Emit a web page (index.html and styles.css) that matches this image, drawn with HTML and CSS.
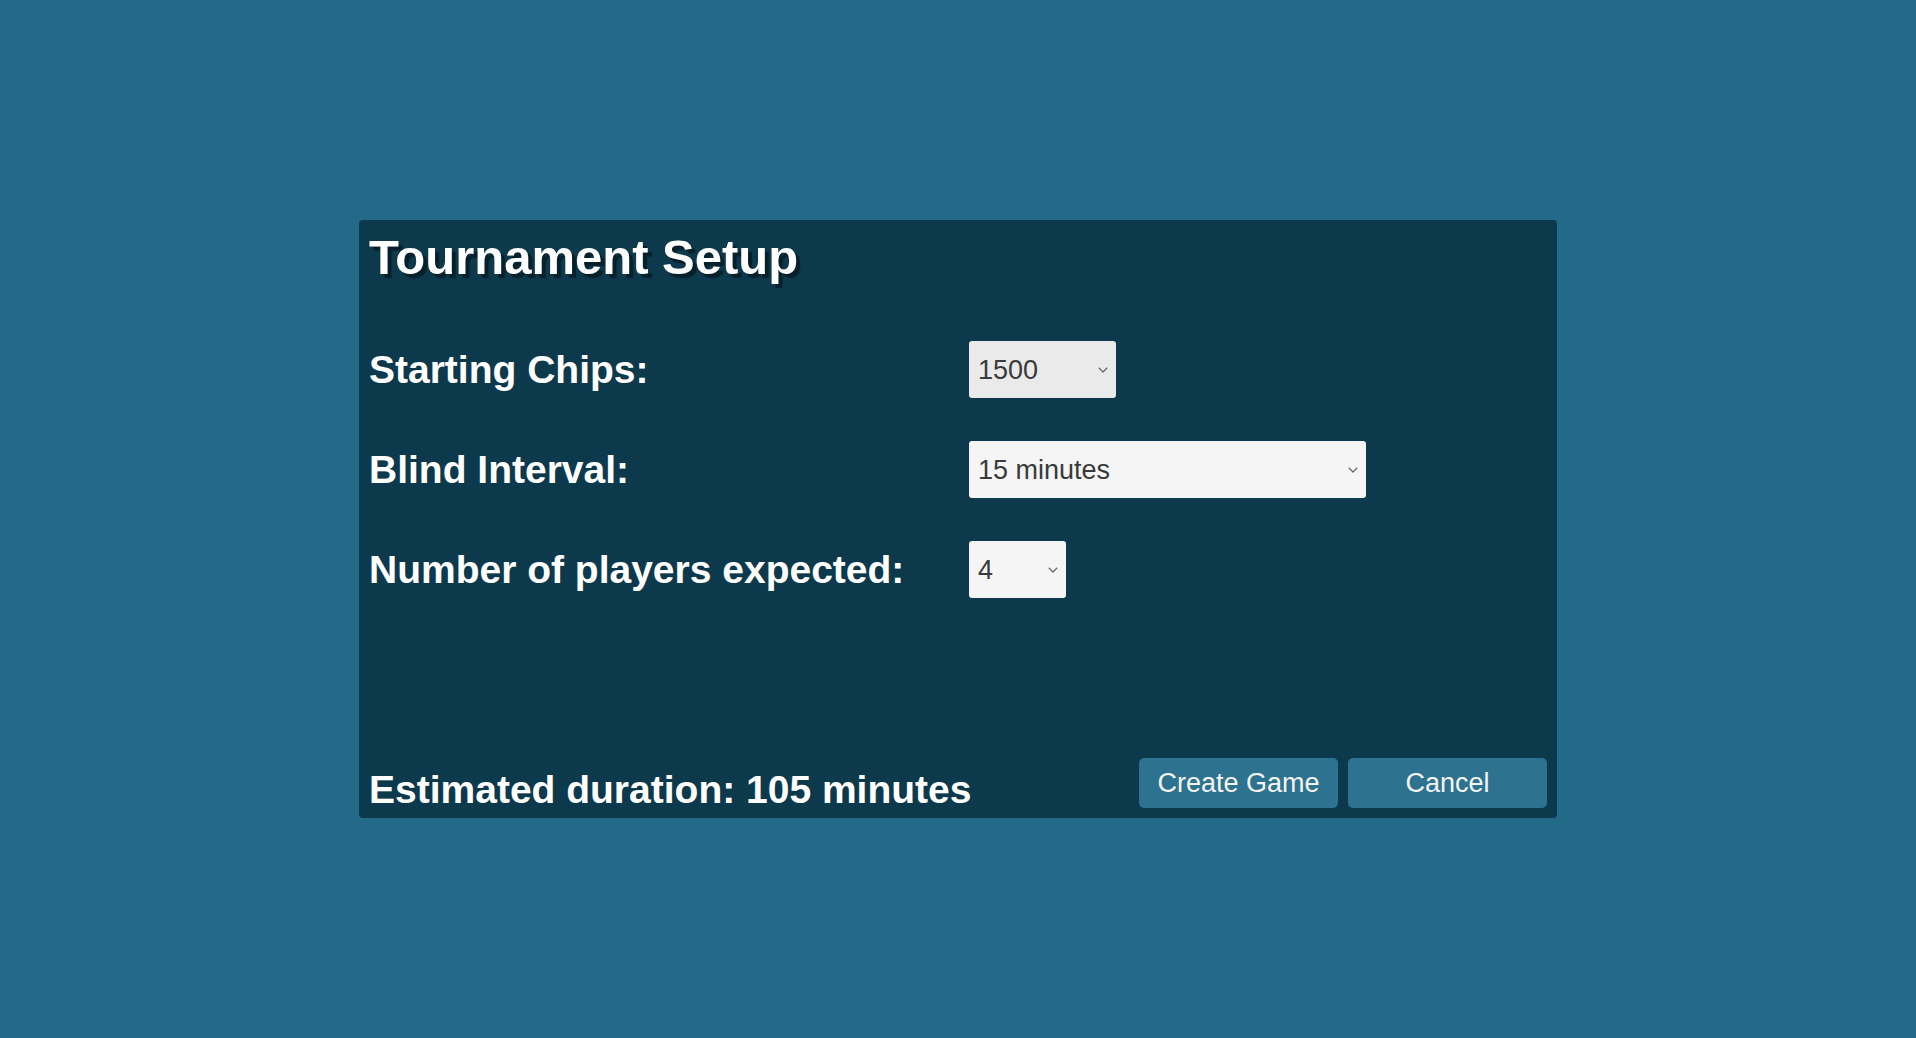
FILE: index.html
```html
<!DOCTYPE html>
<html lang="en">
<head>
  <meta charset="utf-8">
  <meta name="viewport" content="width=device-width, initial-scale=1">
  <title>Tournament Setup</title>
  <link rel="stylesheet" href="styles.css">
</head>
<body>
  <main class="page">
    <form class="panel">
      <h1 class="title">Tournament Setup</h1>
      <div class="fields">
        <div class="field">
          <label class="label" for="chips">Starting Chips:</label>
          <div class="picker picker-medium">
            <select class="select select-active" id="chips"><option>1500</option></select>
            <svg class="chevron" viewBox="0 0 10 6" aria-hidden="true"><path d="M0.8 0.8L5 5L9.2 0.8"/></svg>
          </div>
        </div>
        <div class="field">
          <label class="label" for="interval">Blind Interval:</label>
          <div class="picker picker-wide">
            <select class="select" id="interval"><option>15 minutes</option></select>
            <svg class="chevron" viewBox="0 0 10 6" aria-hidden="true"><path d="M0.8 0.8L5 5L9.2 0.8"/></svg>
          </div>
        </div>
        <div class="field">
          <label class="label" for="players">Number of players expected:</label>
          <div class="picker picker-small">
            <select class="select" id="players"><option>4</option></select>
            <svg class="chevron" viewBox="0 0 10 6" aria-hidden="true"><path d="M0.8 0.8L5 5L9.2 0.8"/></svg>
          </div>
        </div>
      </div>
      <footer class="footer">
        <p class="duration">Estimated duration: 105 minutes</p>
        <div class="actions">
          <button class="button" type="button">Create Game</button>
          <button class="button" type="button">Cancel</button>
        </div>
      </footer>
    </form>
  </main>
</body>
</html>
```
FILE: styles.css
```css
* {
  box-sizing: border-box;
}

body {
  margin: 0;
  background: #236a88;
  color: #fff;
  font-family: "Liberation Sans", Arial, sans-serif;
}

.page {
  display: flex;
  align-items: center;
  justify-content: center;
  min-height: 100vh;
}

.panel {
  display: flex;
  flex-direction: column;
  width: 100%;
  max-width: 1198px;
  min-height: 598px;
  padding: 10px;
  border-radius: 4px;
  background: #0d394c;
}

.title {
  margin: 0;
  font-size: 49px;
  line-height: 54px;
  text-shadow: 4px 4px 1px #08202a;
}

.fields {
  display: flex;
  flex-direction: column;
  gap: 43px;
  padding: 57px 0 40px;
}

.field {
  display: grid;
  grid-template-columns: minmax(0, 600fr) minmax(0, 578fr);
  align-items: center;
}

.label,
.duration {
  margin: 0;
  font-size: 39px;
  font-weight: bold;
  line-height: 36px;
}

.picker {
  position: relative;
  max-width: 100%;
}

.picker-small {
  width: 97px;
}

.picker-medium {
  width: 147px;
}

.picker-wide {
  width: 397px;
}

.select {
  display: block;
  appearance: none;
  width: 100%;
  height: 57px;
  padding: 0 32px 0 9px;
  border: 0;
  border-radius: 3px;
  background: #f5f5f5;
  color: #3a3a3a;
  font: 27px "Liberation Sans", Arial, sans-serif;
}

.select-active {
  background: #eaeaea;
}

.chevron {
  position: absolute;
  top: 26px;
  right: 8px;
  width: 10px;
  height: 6px;
  fill: none;
  stroke: #6a6a6a;
  stroke-width: 1.3;
  pointer-events: none;
}

.footer {
  display: flex;
  align-items: flex-end;
  justify-content: space-between;
  gap: 10px;
  margin-top: auto;
}

.actions {
  display: flex;
  gap: 10px;
}

.button {
  width: 199px;
  height: 50px;
  padding: 0;
  border: 0;
  border-radius: 5px;
  background: #2d728f;
  color: #f4f4f4;
  font: 27px "Liberation Sans", Arial, sans-serif;
}
```
